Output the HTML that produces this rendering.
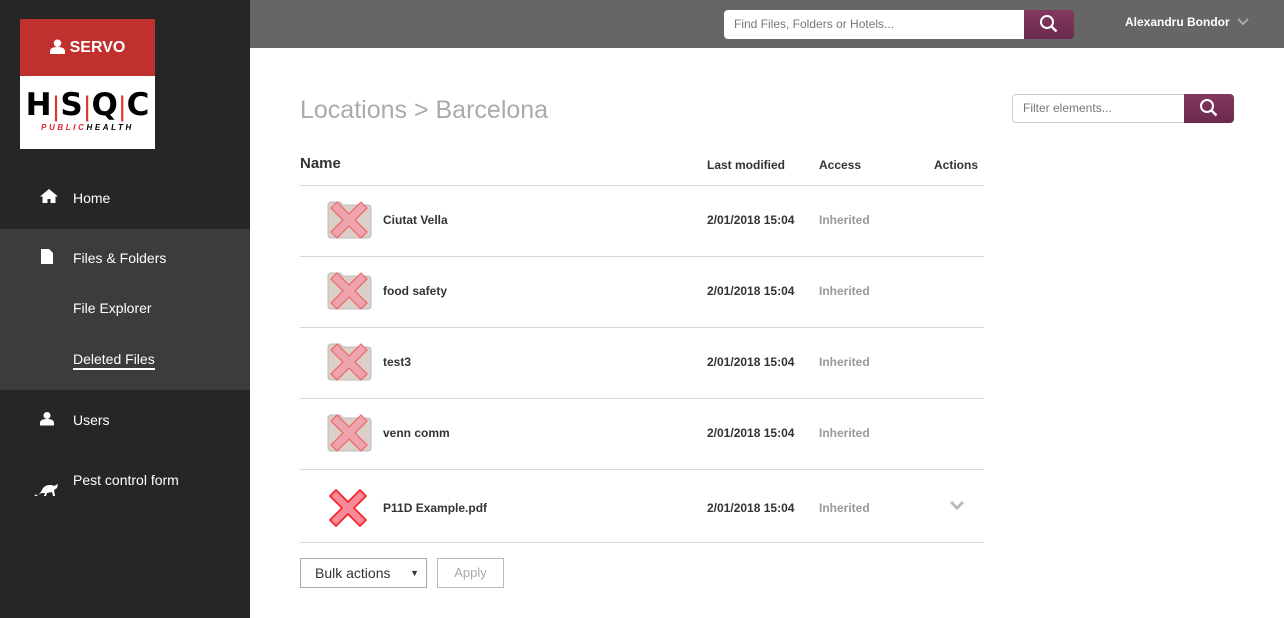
<!DOCTYPE html>
<html><head><meta charset="utf-8"><style>
*{margin:0;padding:0;box-sizing:border-box}
body{width:1284px;height:618px;overflow:hidden;background:#fff;font-family:"Liberation Sans",sans-serif;position:relative}
.abs{position:absolute}
#side{left:0;top:0;width:250px;height:618px;background:#262626}
#top{left:250px;top:0;width:1034px;height:48px;background:#666}
.nav{color:#fff;font-size:14px;position:absolute;left:73px}
.cell{position:absolute;font-size:12px;font-weight:bold;color:#333}
.line{position:absolute;left:300px;width:684px;height:1px;background:#d8d8d8}
.btn{background:linear-gradient(#85385f,#6a2a4e)}
</style></head><body>
<div id="side" class="abs">
 <div class="abs" style="left:20px;top:19px;width:135px;height:130px;background:#fff">
  <div style="height:57px;background:#c0302f;color:#fff;font-size:16px;font-weight:bold;text-align:center;line-height:57px">
   <svg width="15" height="15" viewBox="0 0 16 16" style="vertical-align:-2px;margin-right:5px"><circle cx="8" cy="4.5" r="4" fill="#fff"/><path d="M0 16v-3c0-3 3-4.5 8-4.5s8 1.5 8 4.5v3z" fill="#fff"/></svg>SERVO</div>
  <div style="text-align:center;font-size:31px;font-weight:bold;color:#000;letter-spacing:0px;margin-top:13px;line-height:32px;font-family:'DejaVu Sans',sans-serif">H<span style="color:#d33;font-weight:normal;font-size:26px">|</span>S<span style="color:#d33;font-weight:normal;font-size:26px">|</span>Q<span style="color:#d33;font-weight:normal;font-size:26px">|</span>C</div>
  <div style="text-align:center;font-size:8px;font-weight:bold;font-style:italic;letter-spacing:2.6px;margin-top:0px"><span style="color:#e0262a">PUBLIC</span>HEALTH</div>
 </div>
 <div class="abs" style="left:0;top:229px;width:250px;height:161px;background:#3c3c3c"></div>
 <svg class="abs" style="left:40px;top:189px" width="18" height="14" viewBox="0 0 18 14"><path d="M9 0L0 7.5h2.5V14h5v-4h3v4h5V7.5H18z" fill="#fff"/></svg>
 <div class="nav" style="top:190px">Home</div>
 <svg class="abs" style="left:41px;top:249px" width="12" height="15" viewBox="0 0 12 15"><path d="M0 0h8l4 4v11H0z" fill="#fff"/></svg>
 <div class="nav" style="top:250px">Files &amp; Folders</div>
 <div class="nav" style="top:300px">File Explorer</div>
 <div class="nav" style="top:351px;border-bottom:2px solid #fff;padding-bottom:1px">Deleted Files</div>
 <svg class="abs" style="left:40px;top:411px" width="14" height="15" viewBox="0 0 16 16"><circle cx="8" cy="4.5" r="4" fill="#fff"/><path d="M0 16v-3c0-3 3-4.5 8-4.5s8 1.5 8 4.5v3z" fill="#fff"/></svg>
 <div class="nav" style="top:412px">Users</div>
 <svg class="abs" style="left:34px;top:480px" width="26" height="18" viewBox="0 0 26 18"><path d="M8 10c2-5 8-6 12-4l4-2-1 4-3 2 1 6h-2l-1-4-5 1-1 3H10l1-3c-3 0-5 0-7 2s-4 1-3-1c1 2 3 1 4 0s2-2 3-4z" fill="#fff"/></svg>
 <div class="nav" style="top:472px">Pest control form</div>
</div>
<div id="top" class="abs"></div>
<div class="abs" style="left:724px;top:10px;width:300px;height:29px;background:#fff;border-radius:4px 0 0 4px;font-size:12px;color:#777;line-height:29px;padding-left:10px">Find Files, Folders or Hotels...</div>
<div class="abs btn" style="left:1024px;top:10px;width:50px;height:29px;border-radius:0 4px 4px 0"><svg width="50" height="29" viewBox="0 0 50 29"><circle cx="23" cy="12" r="6" stroke="#fff" stroke-width="2" fill="none"/><path d="M27.5 16.5l5 5" stroke="#fff" stroke-width="2.4"/></svg></div>
<div class="abs" style="left:1125px;top:15px;font-size:12px;font-weight:bold;color:#fff">Alexandru Bondor</div>
<svg class="abs" style="left:1237px;top:18px" width="12" height="8" viewBox="0 0 12 8"><path d="M1 1l5 5 5-5" stroke="#aaa" stroke-width="2" fill="none"/></svg>

<div class="abs" style="left:300px;top:96px;font-size:25px;color:#aaa">Locations &gt; Barcelona</div>
<div class="abs" style="left:1012px;top:94px;width:173px;height:29px;border:1px solid #ccc;border-radius:4px 0 0 4px;font-size:12px;color:#777;line-height:27px;padding-left:10px">Filter elements...</div>
<div class="abs btn" style="left:1184px;top:94px;width:50px;height:29px;border-radius:0 4px 4px 0"><svg width="50" height="29" viewBox="0 0 50 29"><circle cx="23" cy="12" r="6" stroke="#fff" stroke-width="2" fill="none"/><path d="M27.5 16.5l5 5" stroke="#fff" stroke-width="2.4"/></svg></div>

<div class="cell" style="left:300px;top:155px;font-size:15px">Name</div>
<div class="cell" style="left:707px;top:158px">Last modified</div>
<div class="cell" style="left:819px;top:158px">Access</div>
<div class="cell" style="left:934px;top:158px">Actions</div>
<div class="line" style="top:185px"></div>
<div class="line" style="top:256px"></div>
<div class="line" style="top:327px"></div>
<div class="line" style="top:398px"></div>
<div class="line" style="top:469px"></div>
<div class="line" style="top:542px"></div>

<svg class="abs" style="left:326px;top:200px" width="48" height="40" viewBox="0 0 48 40"><path d="M4 2h10l3 3h25a3 3 0 0 1 3 3v27a3 3 0 0 1-3 3H5a3 3 0 0 1-3-3V4z" fill="#dccfc8" stroke="#bbb"/><path d="M5 8l6-6 12 12 12-12 6 6-12 12 12 12-6 6-12-12-12 12-6-6 12-12z" fill="#f29aa8" stroke="#e55" stroke-width="1.3" opacity=".8"/></svg>
<div class="cell" style="left:383px;top:213px">Ciutat Vella</div>
<svg class="abs" style="left:326px;top:271px" width="48" height="40" viewBox="0 0 48 40"><path d="M4 2h10l3 3h25a3 3 0 0 1 3 3v27a3 3 0 0 1-3 3H5a3 3 0 0 1-3-3V4z" fill="#dccfc8" stroke="#bbb"/><path d="M5 8l6-6 12 12 12-12 6 6-12 12 12 12-6 6-12-12-12 12-6-6 12-12z" fill="#f29aa8" stroke="#e55" stroke-width="1.3" opacity=".8"/></svg>
<div class="cell" style="left:383px;top:284px">food safety</div>
<svg class="abs" style="left:326px;top:342px" width="48" height="40" viewBox="0 0 48 40"><path d="M4 2h10l3 3h25a3 3 0 0 1 3 3v27a3 3 0 0 1-3 3H5a3 3 0 0 1-3-3V4z" fill="#dccfc8" stroke="#bbb"/><path d="M5 8l6-6 12 12 12-12 6 6-12 12 12 12-6 6-12-12-12 12-6-6 12-12z" fill="#f29aa8" stroke="#e55" stroke-width="1.3" opacity=".8"/></svg>
<div class="cell" style="left:383px;top:355px">test3</div>
<svg class="abs" style="left:326px;top:413px" width="48" height="40" viewBox="0 0 48 40"><path d="M4 2h10l3 3h25a3 3 0 0 1 3 3v27a3 3 0 0 1-3 3H5a3 3 0 0 1-3-3V4z" fill="#dccfc8" stroke="#bbb"/><path d="M5 8l6-6 12 12 12-12 6 6-12 12 12 12-6 6-12-12-12 12-6-6 12-12z" fill="#f29aa8" stroke="#e55" stroke-width="1.3" opacity=".8"/></svg>
<div class="cell" style="left:383px;top:426px">venn comm</div>
<svg class="abs" style="left:328px;top:488px" width="40" height="40" viewBox="0 0 40 40"><path d="M2 8l6-6 12 12 12-12 6 6-12 12 12 12-6 6-12-12-12 12-6-6 12-12z" fill="#f7899b" stroke="#e22" stroke-width="1.6" stroke-linejoin="round"/></svg>
<div class="cell" style="left:383px;top:501px">P11D Example.pdf</div>

<div class="cell" style="left:707px;top:213px">2/01/2018 15:04</div>
<div class="cell" style="left:707px;top:284px">2/01/2018 15:04</div>
<div class="cell" style="left:707px;top:355px">2/01/2018 15:04</div>
<div class="cell" style="left:707px;top:426px">2/01/2018 15:04</div>
<div class="cell" style="left:707px;top:501px">2/01/2018 15:04</div>
<div class="cell" style="left:819px;top:213px;color:#999">Inherited</div>
<div class="cell" style="left:819px;top:284px;color:#999">Inherited</div>
<div class="cell" style="left:819px;top:355px;color:#999">Inherited</div>
<div class="cell" style="left:819px;top:426px;color:#999">Inherited</div>
<div class="cell" style="left:819px;top:501px;color:#999">Inherited</div>
<svg class="abs" style="left:949px;top:500px" width="16" height="11" viewBox="0 0 16 11"><path d="M2 2l6 6 6-6" stroke="#bbb" stroke-width="3" fill="none"/></svg>

<div class="abs" style="left:300px;top:558px;width:127px;height:30px;border:1px solid #aaa;font-size:14px;color:#333;line-height:28px;padding-left:14px">Bulk actions <span style="position:absolute;right:7px;font-size:9px">&#9660;</span></div>
<div class="abs" style="left:437px;top:558px;width:67px;height:30px;border:1px solid #bbb;font-size:13px;color:#aaa;line-height:28px;text-align:center">Apply</div>
</body></html>
